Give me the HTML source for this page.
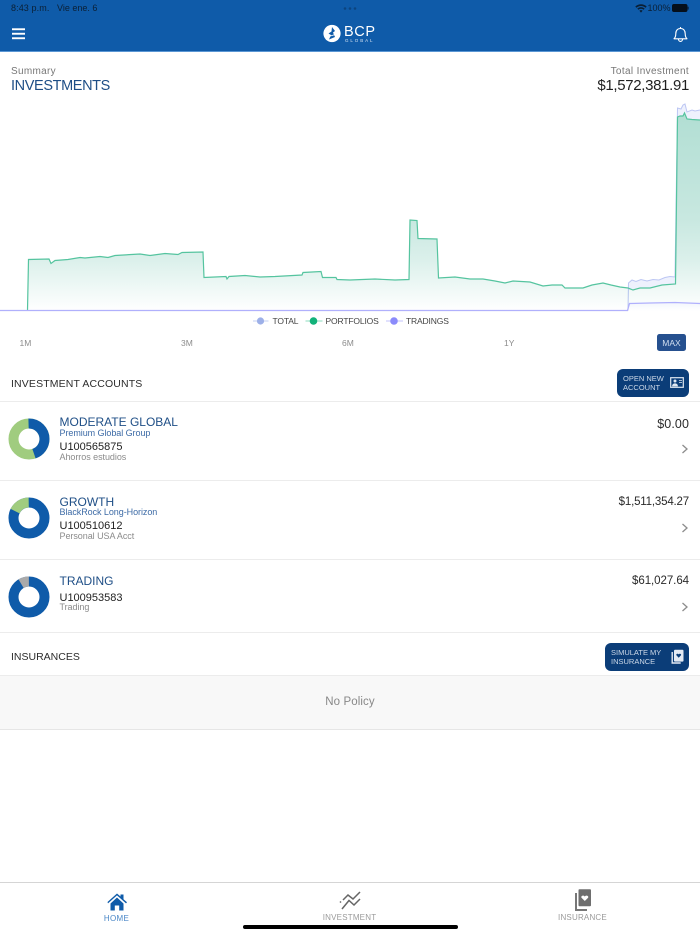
<!DOCTYPE html>
<html><head><meta charset="utf-8"><style>
html,body{margin:0;padding:0;background:#fff}
body{width:700px;height:934px;position:relative;overflow:hidden;font-family:"Liberation Sans",sans-serif}
.t{position:absolute;white-space:nowrap;line-height:1}
.r{text-align:right}
.hr{position:absolute;left:0;width:700px;background:#ececec}
svg{position:absolute;overflow:visible}
.n{font-size:12px;color:#1e4e86;letter-spacing:0}
.s{font-size:9px;color:#3d6ba6;letter-spacing:-.06px}
.u{font-size:11px;color:#222;letter-spacing:0}
.d{font-size:9px;color:#8b8b8b;letter-spacing:-.05px}
.a{font-size:11.5px;color:#2a2a2a;right:11px;letter-spacing:-.18px}
.b{font-size:7.5px;color:#cdd9e8;letter-spacing:0}
.l{font-size:8.5px;color:#444;letter-spacing:-.15px}
.x{font-size:8.5px;color:#8c8c8c}
.btn{position:absolute;background:#0b3d78;border-radius:6px}
</style></head><body>
<div style="position:absolute;left:0;top:0;width:700px;height:51px;background:#0f5ba9;border-bottom:1px solid #5a97d4"></div>
<div class="t" style="left:11px;top:3.5px;font-size:9px;color:#0b2036;letter-spacing:.1px">8:43 p.m.</div>
<div class="t" style="left:57px;top:3.5px;font-size:9px;color:#0b2036">Vie ene. 6</div>
<svg style="left:343px;top:7px" width="14" height="3"><circle cx="2" cy="1.5" r="1.3" fill="#0c447f"/><circle cx="7" cy="1.5" r="1.3" fill="#0c447f"/><circle cx="12" cy="1.5" r="1.3" fill="#0c447f"/></svg>
<svg style="left:635px;top:4px" width="12" height="9" viewBox="0 0 12 9"><path d="M6 8.6 4.4 6.8a2.4 2.4 0 0 1 3.2 0ZM3.4 5.8 2.3 4.6a5.4 5.4 0 0 1 7.4 0L8.6 5.8a3.9 3.9 0 0 0-5.2 0ZM1.5 3.8.3 2.6a8.2 8.2 0 0 1 11.4 0l-1.2 1.2a6.6 6.6 0 0 0-9 0Z" fill="#0a1f35"/></svg>
<div class="t" style="left:647.500px;top:3.500px;font-size:9px;color:#0b2036">100%</div>
<svg style="left:672px;top:4px" width="18" height="9"><rect x=".5" y=".5" width="14.5" height="7" rx="1.5" fill="#050f1a" stroke="#050f1a"/><rect x="15.6" y="2.6" width="1.2" height="3" rx=".5" fill="#0a2b4e"/></svg>
<svg style="left:12px;top:28px" width="14" height="12"><rect x="0" y=".3" width="13" height="1.9" fill="#fff"/><rect x="0" y="4.8" width="13" height="1.9" fill="#fff"/><rect x="0" y="9.3" width="13" height="1.9" fill="#fff"/></svg>
<svg style="left:323px;top:24px" width="18" height="19" viewBox="0 0 18 19"><circle cx="9" cy="9.5" r="8.6" fill="#fff"/><path d="M9 3 12 7 10 8.5 12 13 6 15.5 8 11 5.5 9.5 8.5 7.5Z" fill="#0f5ba9"/><path d="M3 13c3-1 7-1 12-4" stroke="#fff" stroke-width="1" fill="none"/></svg>
<div class="t" style="left:344px;top:24.5px;font-size:14.5px;color:#fff;letter-spacing:.6px">BCP</div>
<div class="t" style="left:345px;top:38.7px;font-size:4.5px;color:#d5e3f3;letter-spacing:1.9px">GLOBAL</div>
<svg style="left:673px;top:26px" width="15" height="17" viewBox="0 0 15 17"><path d="M1 12.8c1.4-1.3 1.8-2.4 1.8-5.2 0-3 1.8-5.1 4.7-5.1s4.7 2.1 4.7 5.1c0 2.8.4 3.9 1.8 5.2ZM7.5 2.5V1M5.4 13c0 3.2 4.2 3.2 4.2 0" fill="none" stroke="#fff" stroke-width="1.1" stroke-linejoin="round"/></svg>

<div class="t" style="left:11px;top:67px;font-size:10px;color:#777;letter-spacing:.3px">Summary</div>
<div class="t" style="left:11px;top:78.5px;font-size:14.5px;color:#1e4e86;letter-spacing:-.38px">INVESTMENTS</div>
<div class="t r" style="right:11px;top:67px;font-size:10px;color:#777;letter-spacing:.35px">Total Investment</div>
<div class="t r" style="right:11px;top:78px;font-size:15px;color:#1f1f1f;letter-spacing:-.33px">$1,572,381.91</div>

<svg style="left:0;top:0" width="700" height="934">
<defs>
<linearGradient id="g" gradientUnits="userSpaceOnUse" x1="0" y1="105" x2="0" y2="311"><stop offset="0" stop-color="#0f9a78" stop-opacity=".33"/><stop offset=".55" stop-color="#0f9a78" stop-opacity=".23"/><stop offset=".75" stop-color="#0f9a78" stop-opacity=".15"/><stop offset="1" stop-color="#0f9a78" stop-opacity="0"/></linearGradient>
<linearGradient id="p" gradientUnits="userSpaceOnUse" x1="0" y1="270" x2="0" y2="311"><stop offset="0" stop-color="#8f8fff" stop-opacity=".28"/><stop offset="1" stop-color="#8f8fff" stop-opacity="0"/></linearGradient>
</defs>
<path d="M628 290 628.5 283 632 280 636 281.5 641 279.5 647 281 653 279.5 659 280 665 277.5 670 276.5 675 277 677.5 108 681 109 683 105 685 104 687 112 692 110 695 111 700 110V120L692 119.500 687 119 684.500 113 683 116 677.500 117 675.500 284 662 285 650 288 640 288 633 290Z" fill="#eef1fd"/>
<path d="M628 310.5 628.5 283 632 280 636 281.5 641 279.5 647 281 653 279.5 659 280 665 277.5 670 276.5 675 277 677.5 108 681 109 683 105 685 104 687 112 692 110 695 111 700 110" fill="none" stroke="#bcc6f3" stroke-width="1"/>
<path d="M27.5 310.500 28.500 259.500 49 259 51 263.500 55 260.500 68 259.500 80 257.500 85 258 100 256.500 108 257.500 115 255.500 140 254 150 255.500 165 253.500 178 254.500 182 252.500 203 252 204 277.500 226 276.500 227 279 229 276.500 245 275.500 260 277 275 276.500 302 275 303 272.500 321 271.500 322.500 277.500 336 277.500 337 279.500 350 280 375 279 395 280 409 279.500 410 220 417 220.500 418 238.500 437 239 438.500 278 455 277 470 279 483 279 495 281 505 283 513 281 530 282 543 286 552 285 562 285 565 288 575 288 583 288 592 285 603 283 611 285 620 287 628 288 633 290 640 288 650 288 662 285 675.500 284 677.500 117 680 116 683 116 684.500 113 687 119 692 119.500 700 120V311H27.500Z" fill="url(#g)"/>
<path d="M27.5 310.500 28.500 259.500 49 259 51 263.500 55 260.500 68 259.500 80 257.500 85 258 100 256.500 108 257.500 115 255.500 140 254 150 255.500 165 253.500 178 254.500 182 252.500 203 252 204 277.500 226 276.500 227 279 229 276.500 245 275.500 260 277 275 276.500 302 275 303 272.500 321 271.500 322.500 277.500 336 277.500 337 279.500 350 280 375 279 395 280 409 279.500 410 220 417 220.500 418 238.500 437 239 438.500 278 455 277 470 279 483 279 495 281 505 283 513 281 530 282 543 286 552 285 562 285 565 288 575 288 583 288 592 285 603 283 611 285 620 287 628 288 633 290 640 288 650 288 662 285 675.500 284 677.500 117 680 116 683 116 684.500 113 687 119 692 119.500 700 120" fill="none" stroke="#55c49f" stroke-width="1.200"/>
<path d="M628 310.500 629.500 303.500 650 303 675 302.500 700 303.500V311H628Z" fill="url(#p)"/>
<path d="M0 310.500H627.500L629.500 303.500 650 303 675 302.500 700 303.500" fill="none" stroke="#b0b0fc" stroke-width="1.300"/>
<path d="M253 321h15.500" stroke="#c3cff3" stroke-width="1"/><circle cx="260.500" cy="321" r="3.600" fill="#9db0e8"/>
<path d="M305.500 321h17" stroke="#8ddcbf" stroke-width="1"/><circle cx="313.500" cy="321" r="3.800" fill="#12b27a"/>
<path d="M386 321h17" stroke="#c3c3fc" stroke-width="1"/><circle cx="394" cy="321" r="3.800" fill="#8b8bfb"/>
</svg>
<div class="t l" style="left:272.500px;top:316.700px">TOTAL</div>
<div class="t l" style="left:325.500px;top:316.700px">PORTFOLIOS</div>
<div class="t l" style="left:406px;top:316.700px">TRADINGS</div>
<div class="t x" style="left:19.500px;top:338.800px">1M</div>
<div class="t x" style="left:181px;top:338.800px">3M</div>
<div class="t x" style="left:342px;top:338.800px">6M</div>
<div class="t x" style="left:504px;top:338.800px">1Y</div>
<div style="position:absolute;left:657px;top:334px;width:29px;height:17px;background:#26508f;border-radius:2.500px"></div>
<div class="t" style="left:657px;width:29px;text-align:center;top:338.800px;font-size:8.500px;color:#d3dff0">MAX</div>

<div class="t" style="left:11px;top:378.500px;font-size:10.500px;color:#2c2c2c;letter-spacing:.14px">INVESTMENT ACCOUNTS</div>
<div class="btn" style="left:617px;top:369px;width:72px;height:28px"></div>
<div class="t b" style="left:623px;top:374.800px">OPEN NEW</div>
<div class="t b" style="left:623px;top:383.800px">ACCOUNT</div>
<svg style="left:670px;top:377px" width="14" height="12"><rect x=".7" y=".7" width="12.600" height="9.600" fill="#0b3d78" stroke="#dfe7f1" stroke-width="1.200"/><circle cx="5" cy="4" r="1.500" fill="#dfe7f1"/><path d="M2.500 9c0-3 5-3 5 0ZM9 3.500h3M9 5.500h3" fill="#dfe7f1" stroke="#dfe7f1" stroke-width=".8"/></svg>

<div class="hr" style="top:400.500px;height:1.500px"></div>
<div class="hr" style="top:480px;height:1px"></div>
<div class="hr" style="top:559px;height:1px"></div>
<div class="hr" style="top:631.500px;height:1.500px"></div>

<svg style="left:8px;top:418px" width="42" height="42" viewBox="0 0 42 42"><circle cx="21" cy="21" r="15.500" fill="none" stroke="#a0cc7f" stroke-width="10"/><circle cx="21" cy="21" r="15.500" fill="none" stroke="#0f5ba9" stroke-width="10" pathLength="100" stroke-dasharray="45 55" transform="rotate(-90 21 21)"/></svg>
<div class="t n" style="left:59.500px;top:416px">MODERATE GLOBAL</div>
<div class="t s" style="left:59.500px;top:428.700px">Premium Global Group</div>
<div class="t u" style="left:59.500px;top:442px">U100565875</div>
<div class="t d" style="left:59.500px;top:453px">Ahorros estudios</div>
<div class="t a r" style="top:417.500px;font-size:12.500px;letter-spacing:.1px">$0.00</div>
<svg style="left:681px;top:444px" width="8" height="10"><path d="M1.500 1 6 5 1.500 9" fill="none" stroke="#8c8c8c" stroke-width="1.300"/></svg>

<svg style="left:8px;top:497px" width="42" height="42" viewBox="0 0 42 42"><circle cx="21" cy="21" r="15.500" fill="none" stroke="#0f5ba9" stroke-width="10"/><circle cx="21" cy="21" r="15.500" fill="none" stroke="#a0cc7f" stroke-width="10" pathLength="100" stroke-dasharray="17 83" transform="rotate(-152 21 21)"/></svg>
<div class="t n" style="left:59.500px;top:495.700px">GROWTH</div>
<div class="t s" style="left:59.500px;top:508px">BlackRock Long-Horizon</div>
<div class="t u" style="left:59.500px;top:521.300px">U100510612</div>
<div class="t d" style="left:59.500px;top:532px">Personal USA Acct</div>
<div class="t a r" style="top:497px">$1,511,354.27</div>
<svg style="left:681px;top:523px" width="8" height="10"><path d="M1.500 1 6 5 1.500 9" fill="none" stroke="#8c8c8c" stroke-width="1.300"/></svg>

<svg style="left:8px;top:576px" width="42" height="42" viewBox="0 0 42 42"><circle cx="21" cy="21" r="15.500" fill="none" stroke="#0f5ba9" stroke-width="10"/><circle cx="21" cy="21" r="15.500" fill="none" stroke="#aaaaaa" stroke-width="10" pathLength="100" stroke-dasharray="8 92" transform="rotate(-119 21 21)"/></svg>
<div class="t n" style="left:59.500px;top:575px">TRADING</div>
<div class="t u" style="left:59.500px;top:592.600px">U100953583</div>
<div class="t d" style="left:59.500px;top:603px">Trading</div>
<div class="t a r" style="top:576px;letter-spacing:-.06px">$61,027.64</div>
<svg style="left:681px;top:602px" width="8" height="10"><path d="M1.500 1 6 5 1.500 9" fill="none" stroke="#8c8c8c" stroke-width="1.300"/></svg>

<div class="t" style="left:11px;top:652px;font-size:10.500px;color:#2c2c2c">INSURANCES</div>
<div class="btn" style="left:605px;top:642.500px;width:84px;height:28.500px"></div>
<div class="t b" style="left:611px;top:648.800px">SIMULATE MY</div>
<div class="t b" style="left:611px;top:657.800px">INSURANCE</div>
<svg style="left:671px;top:649px" width="13" height="15"><path d="M1.200 3v11h8.500" fill="none" stroke="#e4eaf3" stroke-width="1.400"/><rect x="3" y=".8" width="9.500" height="11.800" rx="1" fill="#e4eaf3"/><path d="M7.700 8.800 5.400 6.200c-.7-1.300 1.500-2.100 2.300-.8.800-1.300 3-.5 2.300.8Z" fill="#0b3d78"/></svg>

<div style="position:absolute;left:0;top:675px;width:700px;height:55px;background:#f8f8f8;border-top:1px solid #ececec;border-bottom:1px solid #e6e6e6;box-sizing:border-box"></div>
<div class="t" style="left:0;width:700px;text-align:center;top:696.800px;font-size:11.500px;color:#888;letter-spacing:.1px">No Policy</div>

<div class="hr" style="top:882px;height:1px;background:#d5d5d5"></div>
<svg style="left:106.500px;top:891.500px" width="21" height="19" viewBox="0 0 21 19"><path d="M.5 10 10 1.500 13.500 4.500V2.500h3v4.800l3.500 2.900-1 1.200-9-8-9 8Z" fill="#0f5ba9"/><path d="M3.500 11.500 10 5.500l6.500 6v7h-4.300v-5H7.800v5H3.500Z" fill="#0f5ba9"/></svg>
<div class="t" style="left:60px;width:113px;text-align:center;top:914.800px;font-size:8px;color:#4a87c7;letter-spacing:.3px">HOME</div>
<svg style="left:339px;top:891px" width="22" height="19" viewBox="0 0 22 19"><path d="M4 9 9 4 14 8 21 1M1 11.500l1-1M3 18 10 9.500 15 14 21 8" fill="none" stroke="#666" stroke-width="1.500"/></svg>
<div class="t" style="left:293px;width:113px;text-align:center;top:913.700px;font-size:8px;color:#9a9a9a;letter-spacing:.2px">INVESTMENT</div>
<svg style="left:575px;top:889px" width="17" height="22" viewBox="0 0 17 22"><path d="M1 4v17h11" fill="none" stroke="#777" stroke-width="2"/><rect x="3.500" y=".3" width="12.500" height="17" rx="1" fill="#6e6e6e"/><path d="M9.800 12 6.500 8.700c-1-1.700 2.200-3 3.300-1.100 1.100-1.900 4.300-.6 3.300 1.100Z" fill="#fff"/></svg>
<div class="t" style="left:526px;width:113px;text-align:center;top:913.800px;font-size:8px;color:#9a9a9a;letter-spacing:.2px">INSURANCE</div>
<div style="position:absolute;left:243px;top:925px;width:215px;height:4px;border-radius:2px;background:#000"></div>
</body></html>
